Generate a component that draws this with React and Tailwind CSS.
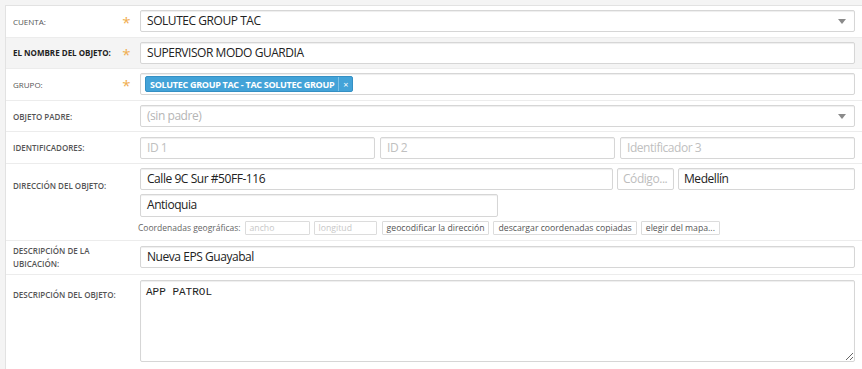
import React from "react";

const inputCls =
  "h-[22px] border border-[#d6d6d6] rounded-[2px] bg-white shadow-[inset_0_1px_1px_rgba(0,0,0,0.07)] flex items-center text-[12px] tracking-[-0.45px] text-[#222] whitespace-nowrap overflow-hidden";

function Arrow() {
  return (
    <svg width="8" height="5" viewBox="0 0 8 5" className="shrink-0">
      <polygon points="0,0 8,0 4,5" fill="#8a8a8a" />
    </svg>
  );
}

function Label({ children, bold, normal, star, className = "" }) {
  return (
    <div className={"w-[127px] shrink-0 flex pl-[7px] " + className}>
      <div
        className={
          "flex-1 text-[8px] uppercase leading-[13px] " +
          (bold
            ? "font-bold text-[#222]"
            : normal
            ? "font-normal text-[#555]"
            : "font-semibold text-[#555]")
        }
      >
        {children}
      </div>
      <div className="w-[13px] text-[15px] leading-[13px] text-[#f0ad4e] text-center pt-[3px]">
        {star ? "*" : ""}
      </div>
    </div>
  );
}

function Row({ children, className = "" }) {
  return (
    <div className={"flex border-b border-[#ececec] pr-[7px] " + className}>
      {children}
    </div>
  );
}

const smallBox =
  "h-[14px] border border-[#dcdcdc] rounded-[1px] px-[4px] flex items-center";

export default function App() {
  return (
    <div className="w-[862px] h-[369px] overflow-hidden bg-[#f4f4f4] pl-[5px] pt-[5px] font-['Open_Sans',sans-serif]">
      <div className="bg-white border-l border-t border-[#e2e2e2] h-[400px]">
        <Row className="h-[31.6px] items-center">
          <Label normal star className="items-center">CUENTA:</Label>
          <div className={inputCls + " flex-1 ml-[7px] justify-between pl-[6px] pr-[8px]"}>
            <span>SOLUTEC GROUP TAC</span>
            <Arrow />
          </div>
        </Row>
        <Row className="h-[31.6px] items-center bg-[#f4f4f4]">
          <Label bold star className="items-center">EL NOMBRE DEL OBJETO:</Label>
          <div className={inputCls + " flex-1 ml-[7px] px-[6px]"}>SUPERVISOR MODO GUARDIA</div>
        </Row>
        <Row className="h-[31.6px] items-center">
          <Label normal star className="items-center">GRUPO:</Label>
          <div className={inputCls + " flex-1 ml-[7px] pl-[4px]"}>
            <div className="h-[16px] flex items-center bg-[#43a3d8] border border-[#3590c4] rounded-[2px] text-white text-[9px] tracking-[-0.3px] font-bold leading-none">
              <span className="px-[4px]">SOLUTEC GROUP TAC - TAC SOLUTEC GROUP</span>
              <span className="border-l border-[#7cc0e6] h-full flex items-center px-[4px] text-[9px] font-normal">×</span>
            </div>
          </div>
        </Row>
        <Row className="h-[31.6px] items-center">
          <Label className="items-center">OBJETO PADRE:</Label>
          <div className={inputCls + " flex-1 ml-[7px] justify-between pl-[6px] pr-[8px]"}>
            <span className="text-[#b5b5b5]">(sin padre)</span>
            <Arrow />
          </div>
        </Row>
        <Row className="h-[31.6px] items-center">
          <Label className="items-center">IDENTIFICADORES:</Label>
          <div className="flex-1 ml-[7px] flex gap-[5px]">
            <div className={inputCls + " flex-1 px-[6px] text-[#c0c0c0]"}>ID 1</div>
            <div className={inputCls + " flex-1 px-[6px] text-[#c0c0c0]"}>ID 2</div>
            <div className={inputCls + " flex-1 px-[6px] text-[#c0c0c0]"}>Identificador 3</div>
          </div>
        </Row>
        <Row className="h-[77px] items-start pt-[4px]">
          <Label className="pt-[11px]">DIRECCIÓN DEL OBJETO:</Label>
          <div className="flex-1 ml-[7px] flex flex-col">
            <div className="flex gap-[4px]">
              <div className={inputCls + " w-[473px] px-[6px]"}>Calle 9C Sur #50FF-116</div>
              <div className={inputCls + " w-[57px] px-[5px] text-[#bdbdbd]"}>Código...</div>
              <div className={inputCls + " flex-1 px-[5px]"}>Medellín</div>
            </div>
            <div className={inputCls + " w-[358px] mt-[4px] h-[23px] px-[6px]"}>Antioquia</div>
            <div className="flex items-center mt-[4px] h-[15px] text-[8.7px] text-[#666] gap-[4px] whitespace-nowrap">
              <span className="-ml-[2px] text-[8.5px]">Coordenadas geográficas:</span>
              <div className={smallBox + " w-[65px] text-[#c8c8c8]"}>ancho</div>
              <div className={smallBox + " w-[63px] text-[#c8c8c8]"}>longitud</div>
              <div className={smallBox + " text-[#555] ml-[1px]"}>geocodificar la dirección</div>
              <div className={smallBox + " text-[#555]"}>descargar coordenadas copiadas</div>
              <div className={smallBox + " text-[#555]"}>elegir del mapa...</div>
            </div>
          </div>
        </Row>
        <Row className="h-[34px] items-center">
          <Label className="items-center">DESCRIPCIÓN DE LA UBICACIÓN:</Label>
          <div className={inputCls + " flex-1 ml-[7px] px-[6px]"}>Nueva EPS Guayabal</div>
        </Row>
        <Row className="items-start pt-[5px] border-b-0">
          <Label className="pt-[8px]">DESCRIPCIÓN DEL OBJETO:</Label>
          <textarea
            readOnly
            defaultValue="APP PATROL"
            className="flex-1 ml-[7px] h-[82px] border border-[#d6d6d6] rounded-[2px] shadow-[inset_0_1px_1px_rgba(0,0,0,0.07)] px-[5px] py-[4px] font-['Liberation_Mono',monospace] text-[11px] leading-[14px] text-[#222] outline-none"
          />
        </Row>
      </div>
    </div>
  );
}
